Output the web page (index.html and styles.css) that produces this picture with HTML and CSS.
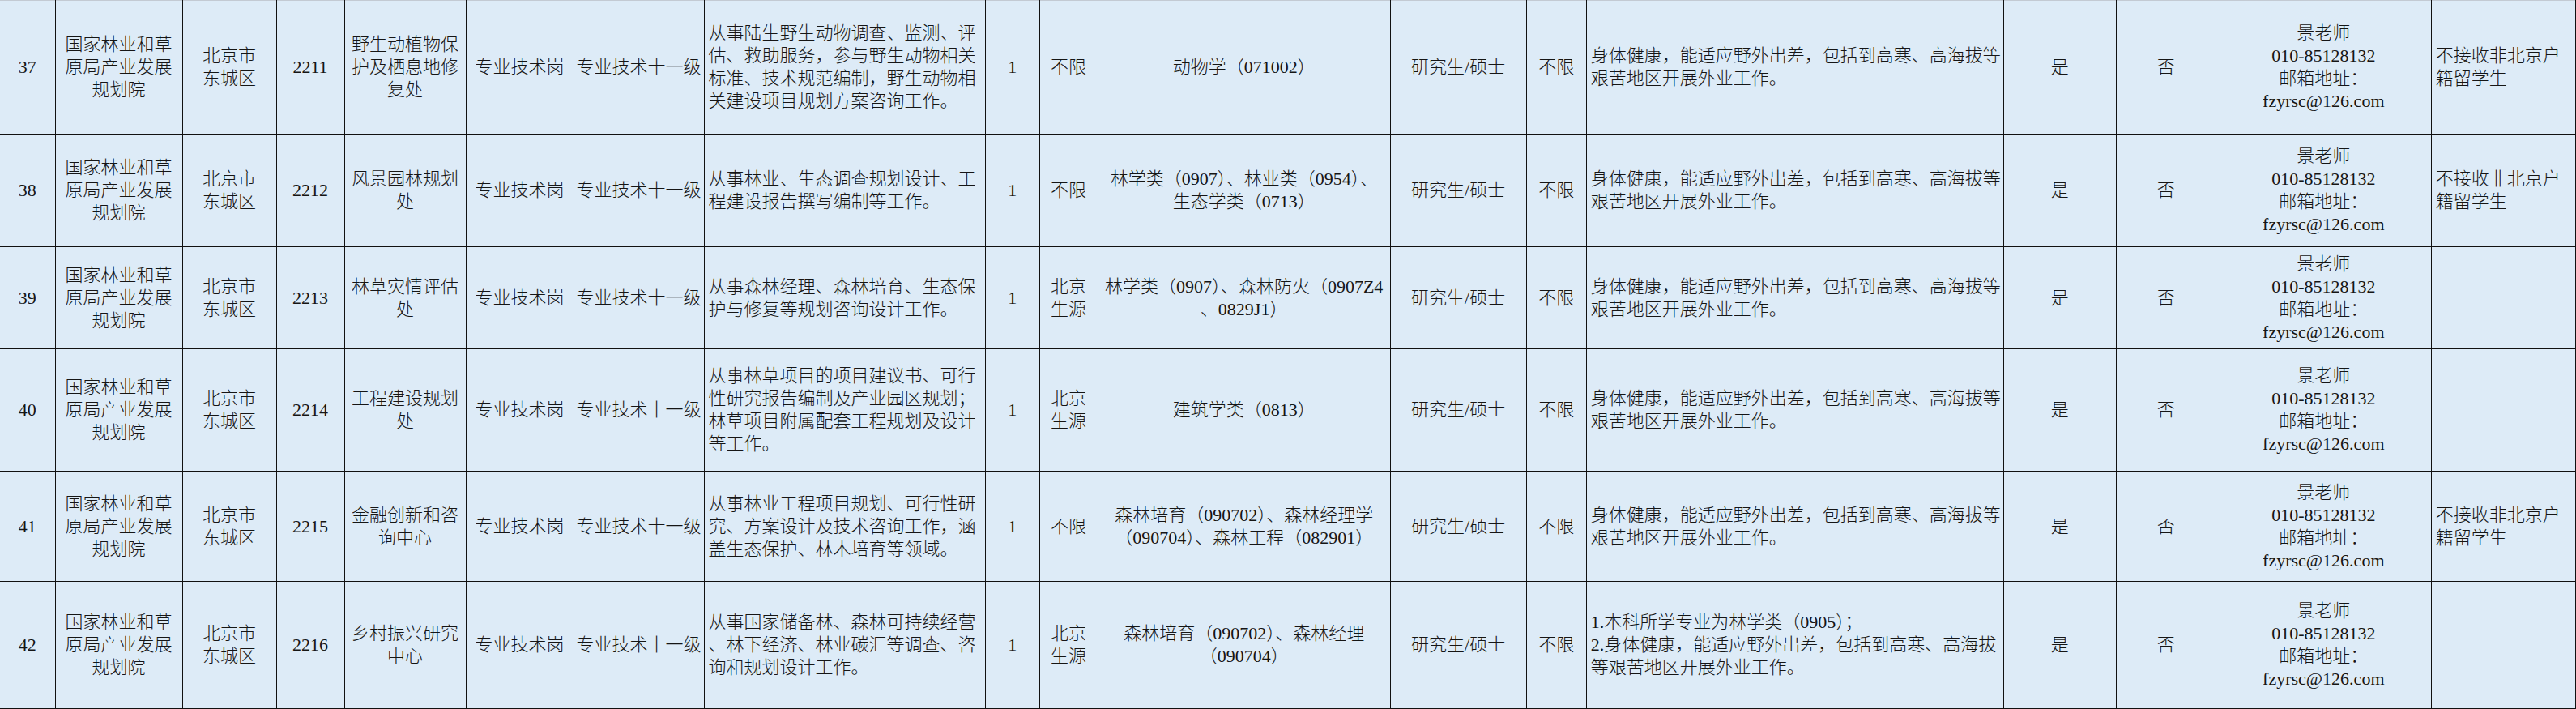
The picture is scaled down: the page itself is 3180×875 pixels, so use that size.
FILE: index.html
```html
<!DOCTYPE html>
<html lang="zh-CN">
<head>
<meta charset="utf-8">
<title>岗位表</title>
<link rel="stylesheet" href="styles.css">
</head>
<body>
<table class="sheet">
<colgroup>
<col class="c1"><col class="c2"><col class="c3"><col class="c4"><col class="c5"><col class="c6"><col class="c7"><col class="c8"><col class="c9"><col class="c10"><col class="c11"><col class="c12"><col class="c13"><col class="c14"><col class="c15"><col class="c16"><col class="c17"><col class="c18">
</colgroup>
<tbody>
<tr class="r1">
<td>37</td>
<td>国家林业和草<br>原局产业发展<br>规划院</td>
<td>北京市<br>东城区</td>
<td>2211</td>
<td>野生动植物保<br>护及栖息地修<br>复处</td>
<td>专业技术岗</td>
<td>专业技术十一级</td>
<td class="left">从事陆生野生动物调查、监测、评<br>估、救助服务，参与野生动物相关<br>标准、技术规范编制，野生动物相<br>关建设项目规划方案咨询工作。</td>
<td>1</td>
<td>不限</td>
<td>动物学（071002）</td>
<td>研究生/硕士</td>
<td>不限</td>
<td class="left">身体健康，能适应野外出差，包括到高寒、高海拔等<br>艰苦地区开展外业工作。</td>
<td>是</td>
<td>否</td>
<td>景老师<br>010-85128132<br>邮箱地址：<br>fzyrsc@126.com</td>
<td class="left">不接收非北京户<br>籍留学生</td>
</tr>
<tr class="r2">
<td>38</td>
<td>国家林业和草<br>原局产业发展<br>规划院</td>
<td>北京市<br>东城区</td>
<td>2212</td>
<td>风景园林规划<br>处</td>
<td>专业技术岗</td>
<td>专业技术十一级</td>
<td class="left">从事林业、生态调查规划设计、工<br>程建设报告撰写编制等工作。</td>
<td>1</td>
<td>不限</td>
<td>林学类（0907）、林业类（0954）、<br>生态学类（0713）</td>
<td>研究生/硕士</td>
<td>不限</td>
<td class="left">身体健康，能适应野外出差，包括到高寒、高海拔等<br>艰苦地区开展外业工作。</td>
<td>是</td>
<td>否</td>
<td>景老师<br>010-85128132<br>邮箱地址：<br>fzyrsc@126.com</td>
<td class="left">不接收非北京户<br>籍留学生</td>
</tr>
<tr class="r3">
<td>39</td>
<td>国家林业和草<br>原局产业发展<br>规划院</td>
<td>北京市<br>东城区</td>
<td>2213</td>
<td>林草灾情评估<br>处</td>
<td>专业技术岗</td>
<td>专业技术十一级</td>
<td class="left">从事森林经理、森林培育、生态保<br>护与修复等规划咨询设计工作。</td>
<td>1</td>
<td>北京<br>生源</td>
<td>林学类（0907）、森林防火（0907Z4<br>、0829J1）</td>
<td>研究生/硕士</td>
<td>不限</td>
<td class="left">身体健康，能适应野外出差，包括到高寒、高海拔等<br>艰苦地区开展外业工作。</td>
<td>是</td>
<td>否</td>
<td>景老师<br>010-85128132<br>邮箱地址：<br>fzyrsc@126.com</td>
<td class="left"></td>
</tr>
<tr class="r4">
<td>40</td>
<td>国家林业和草<br>原局产业发展<br>规划院</td>
<td>北京市<br>东城区</td>
<td>2214</td>
<td>工程建设规划<br>处</td>
<td>专业技术岗</td>
<td>专业技术十一级</td>
<td class="left">从事林草项目的项目建议书、可行<br>性研究报告编制及产业园区规划；<br>林草项目附属配套工程规划及设计<br>等工作。</td>
<td>1</td>
<td>北京<br>生源</td>
<td>建筑学类（0813）</td>
<td>研究生/硕士</td>
<td>不限</td>
<td class="left">身体健康，能适应野外出差，包括到高寒、高海拔等<br>艰苦地区开展外业工作。</td>
<td>是</td>
<td>否</td>
<td>景老师<br>010-85128132<br>邮箱地址：<br>fzyrsc@126.com</td>
<td class="left"></td>
</tr>
<tr class="r5">
<td>41</td>
<td>国家林业和草<br>原局产业发展<br>规划院</td>
<td>北京市<br>东城区</td>
<td>2215</td>
<td>金融创新和咨<br>询中心</td>
<td>专业技术岗</td>
<td>专业技术十一级</td>
<td class="left">从事林业工程项目规划、可行性研<br>究、方案设计及技术咨询工作，涵<br>盖生态保护、林木培育等领域。</td>
<td>1</td>
<td>不限</td>
<td>森林培育（090702）、森林经理学<br>（090704）、森林工程（082901）</td>
<td>研究生/硕士</td>
<td>不限</td>
<td class="left">身体健康，能适应野外出差，包括到高寒、高海拔等<br>艰苦地区开展外业工作。</td>
<td>是</td>
<td>否</td>
<td>景老师<br>010-85128132<br>邮箱地址：<br>fzyrsc@126.com</td>
<td class="left">不接收非北京户<br>籍留学生</td>
</tr>
<tr class="r6">
<td>42</td>
<td>国家林业和草<br>原局产业发展<br>规划院</td>
<td>北京市<br>东城区</td>
<td>2216</td>
<td>乡村振兴研究<br>中心</td>
<td>专业技术岗</td>
<td>专业技术十一级</td>
<td class="left">从事国家储备林、森林可持续经营<br>、林下经济、林业碳汇等调查、咨<br>询和规划设计工作。</td>
<td>1</td>
<td>北京<br>生源</td>
<td>森林培育（090702）、森林经理<br>（090704）</td>
<td>研究生/硕士</td>
<td>不限</td>
<td class="left">1.本科所学专业为林学类（0905）；<br>2.身体健康，能适应野外出差，包括到高寒、高海拔<br>等艰苦地区开展外业工作。</td>
<td>是</td>
<td>否</td>
<td>景老师<br>010-85128132<br>邮箱地址：<br>fzyrsc@126.com</td>
<td class="left"></td>
</tr>
</tbody>
</table>
</body>
</html>
```
FILE: styles.css
```css
html, body {
  margin: 0;
  padding: 0;
  background: #ddebf7;
}

.sheet {
  table-layout: fixed;
  width: 3180px;
  border-collapse: collapse;
  background: #ddebf7;
  font-family: "Liberation Serif", "Noto Sans CJK SC", serif;
  font-size: 22px;
  line-height: 28px;
  font-weight: 300;
  color: #151515;
  border-top: 1px solid #c3cad3;
}

.sheet td {
  border-left: 1px solid #111;
  border-right: 1px solid #111;
  border-bottom: 1px solid #111;
  padding: 0 3px;
  text-align: center;
  vertical-align: middle;
  white-space: nowrap;
  overflow: hidden;
}

.sheet td:first-child {
  border-left: none;
}

.sheet td.left {
  text-align: left;
  padding-left: 5px;
}

.sheet tr:first-child td {
  border-top: 1px solid #c3cad3;
}

.r1 { height: 165px; }
.r2 { height: 139px; }
.r3 { height: 126px; }
.r4 { height: 151px; }
.r5 { height: 136px; }
.r6 { height: 157px; }

.c1 { width: 68px; }
.c2 { width: 157px; }
.c3 { width: 116px; }
.c4 { width: 84px; }
.c5 { width: 150px; }
.c6 { width: 133px; }
.c7 { width: 161px; }
.c8 { width: 347px; }
.c9 { width: 67px; }
.c10 { width: 72px; }
.c11 { width: 361px; }
.c12 { width: 168px; }
.c13 { width: 74px; }
.c14 { width: 515px; }
.c15 { width: 139px; }
.c16 { width: 123px; }
.c17 { width: 266px; }
.c18 { width: 178px; }
```
